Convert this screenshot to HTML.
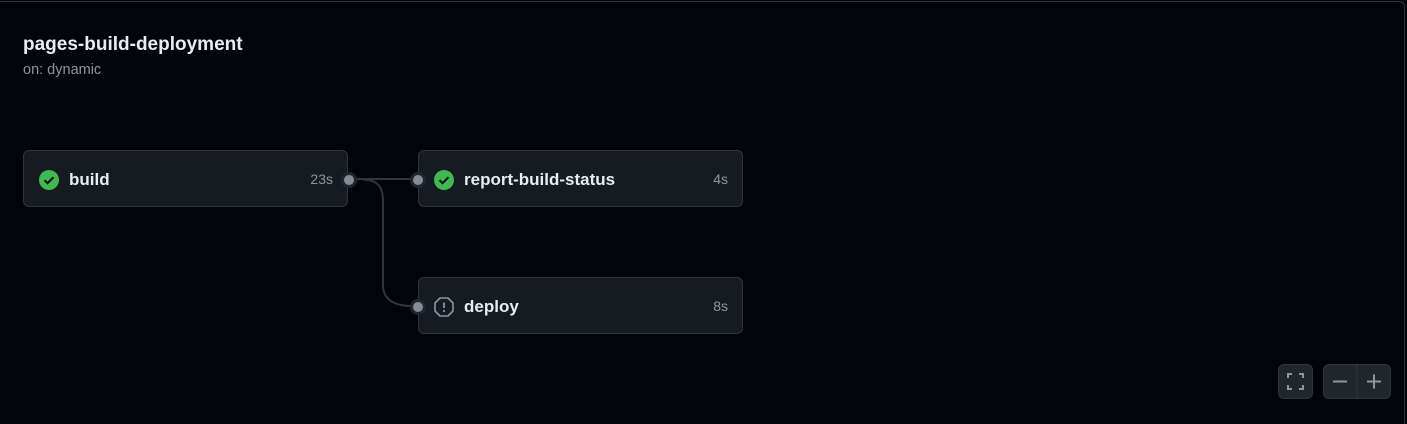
<!DOCTYPE html>
<html><head><style>
body{margin:0;width:1407px;height:423px;background:#010409;font-family:"Liberation Sans",sans-serif;position:relative;overflow:hidden}
.top{position:absolute;left:0;top:1px;width:1405px;height:423px;border-top:1px solid #30363d;border-right:1px solid #30363d;box-sizing:border-box;border-radius:0 6px 0 0}
h1{position:absolute;left:23px;top:34px;margin:0;font-size:19px;font-weight:bold;color:#e6edf3}
.sub{position:absolute;left:23px;top:62px;font-size:14.5px;color:#8d96a0}
.card{position:absolute;width:325px;height:57px;background:#161b22;border:1px solid #30363d;border-radius:6px;box-sizing:border-box}
.card .n{position:absolute;left:45px;top:19px;font-size:17px;font-weight:bold;color:#e6edf3}
.card .t{position:absolute;right:14px;top:20px;font-size:14px;color:#8d96a0}
.card svg{position:absolute;left:14px;top:18px}
.dot{position:absolute;width:10px;height:10px;border-radius:50%;background:#848d97;border:3px solid #21262d}
.btn{position:absolute;background:#21262d;border:1px solid #30363d;border-radius:6px;box-sizing:border-box}
</style></head><body>
<div class="top"></div>
<h1>pages-build-deployment</h1>
<div class="sub">on: dynamic</div>
<svg style="position:absolute;left:0;top:0" width="1407" height="423"><path d="M347 179 H412 M354 179 C370 179 383 180 383 200 V285 C383 300 395 306 412 306" stroke="#30363d" stroke-width="2" fill="none"/></svg>
<div class="card" style="left:23px;top:150px"><svg width="22" height="22" viewBox="0 0 22 22"><circle cx="11" cy="11" r="10" fill="#3fb950"/><path d="M6.5 11.2l3 3 6-6" stroke="#0d1117" stroke-width="2" fill="none"/></svg><span class="n">build</span><span class="t">23s</span></div>
<div class="card" style="left:418px;top:150px"><svg width="22" height="22" viewBox="0 0 22 22"><circle cx="11" cy="11" r="10" fill="#3fb950"/><path d="M6.5 11.2l3 3 6-6" stroke="#0d1117" stroke-width="2" fill="none"/></svg><span class="n">report-build-status</span><span class="t">4s</span></div>
<div class="card" style="left:418px;top:277px"><svg width="22" height="22" viewBox="0 0 22 22"><path d="M7 2h8l5 5v8l-5 5H7l-5-5V7z" stroke="#8d96a0" stroke-width="1.6" fill="none" stroke-linejoin="round"/><path d="M11 6.5v5.5" stroke="#8d96a0" stroke-width="1.8"/><circle cx="11" cy="15" r="1.1" fill="#8d96a0"/></svg><span class="n">deploy</span><span class="t">8s</span></div>
<div class="dot" style="left:341px;top:172px"></div>
<div class="dot" style="left:410px;top:172px"></div>
<div class="dot" style="left:410px;top:299px"></div>
<div class="btn" style="left:1278px;top:364px;width:35px;height:35px"><svg width="33" height="33" viewBox="0 0 33 33"><path d="M9 13V9h4M20 9h4v4M24 20v4h-4M13 24H9v-4" stroke="#8d96a0" stroke-width="2" fill="none"/></svg></div>
<div class="btn" style="left:1323px;top:364px;width:68px;height:35px"><svg width="66" height="33" viewBox="0 0 66 33"><path d="M9 16.5h14" stroke="#8d96a0" stroke-width="2"/><path d="M33 0v33" stroke="#30363d"/><path d="M43 16.5h14M50 9.5v14" stroke="#8d96a0" stroke-width="2"/></svg></div>
</body></html>
